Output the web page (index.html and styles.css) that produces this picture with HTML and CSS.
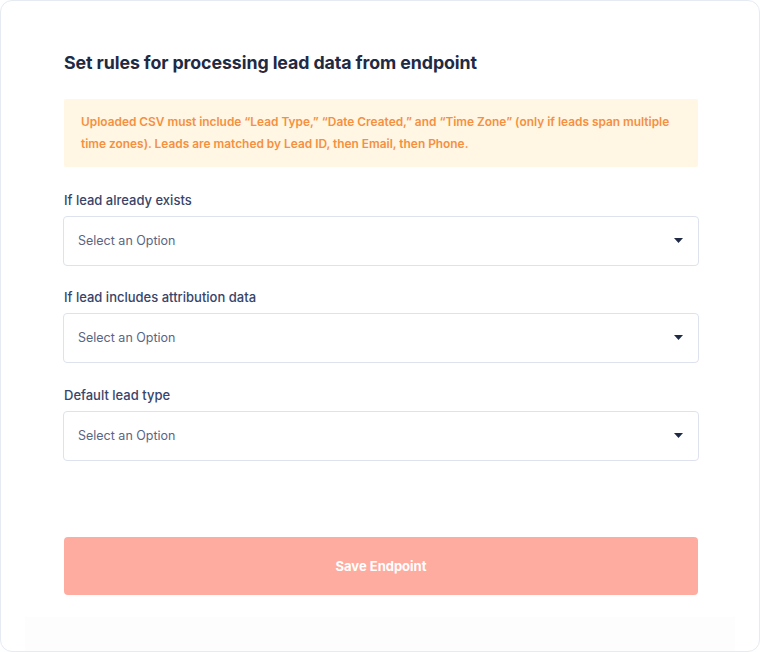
FILE: index.html
```html
<!DOCTYPE html>
<html lang="en">
<head>
<meta charset="utf-8">
<title>Endpoint rules</title>
<link rel="stylesheet" href="styles.css">
</head>
<body>
<div class="card">
  <div class="content">
    <h1 class="title">Set rules for processing lead data from endpoint</h1>
    <div class="notice">Uploaded CSV must include “Lead Type,” “Date Created,” and “Time Zone” (only if leads span multiple time zones). Leads are matched by Lead ID, then Email, then Phone.</div>
    <div class="field">
      <label class="label">If lead already exists</label>
      <div class="select"><span>Select an Option</span><svg class="caret" width="9" height="5" viewBox="0 0 9 5"><path d="M0 0H9L4.5 5Z" fill="#1f2a44"/></svg></div>
    </div>
    <div class="field">
      <label class="label">If lead includes attribution data</label>
      <div class="select"><span>Select an Option</span><svg class="caret" width="9" height="5" viewBox="0 0 9 5"><path d="M0 0H9L4.5 5Z" fill="#1f2a44"/></svg></div>
    </div>
    <div class="field field-last">
      <label class="label">Default lead type</label>
      <div class="select"><span>Select an Option</span><svg class="caret" width="9" height="5" viewBox="0 0 9 5"><path d="M0 0H9L4.5 5Z" fill="#1f2a44"/></svg></div>
    </div>
    <button class="save">Save Endpoint</button>
  </div>
  <div class="footer"></div>
</div>
</body>
</html>
```
FILE: styles.css
```css
html, body {
  margin: 0;
  padding: 0;
  background: #ffffff;
}
body {
  font-family: Inter, "Noto Sans", sans-serif;
}
.card {
  box-sizing: border-box;
  width: 760px;
  height: 652px;
  border: 1px solid #e6eaf2;
  border-radius: 12px;
  background: #ffffff;
  display: flex;
  flex-direction: column;
  overflow: hidden;
}
.content {
  padding: 51px 61px 0 63px;
  display: flex;
  flex-direction: column;
}
.title {
  margin: 0;
  font-size: 17.8px;
  line-height: 22px;
  font-weight: 700;
  color: #1f2a44;
  letter-spacing: -0.1px;
}
.notice {
  margin-top: 25px;
  background: #fff6e4;
  color: #f5903f;
  font-size: 11.9px;
  font-weight: 600;
  line-height: 22px;
  padding: 12px 17px 12px 17px;
  border-radius: 2px;
}
.field {
  display: flex;
  flex-direction: column;
  margin-top: 24px;
}
.field + .field {
  margin-top: 22px;
}
.field + .field-last {
  margin-top: 23px;
}
.label {
  font-size: 13px;
  font-weight: 500;
  color: #38446a;
  line-height: 18px;
  margin-bottom: 7px;
}
.select {
  box-sizing: border-box;
  height: 50px;
  margin-left: -1px;
  margin-right: -1px;
  border: 1px solid #dde2ee;
  border-radius: 4px;
  display: flex;
  align-items: center;
  justify-content: space-between;
  padding: 0 15px 1px 14px;
  font-size: 12.5px;
  color: #5a6583;
}
.caret {
  display: block;
}
.save {
  margin-top: 76px;
  height: 58px;
  border: none;
  border-radius: 4px;
  background: #ffaca0;
  color: #ffffff;
  font-family: Inter, "Noto Sans", sans-serif;
  font-size: 13px;
  font-weight: 700;
}
.footer {
  margin: 22px 24px 0 24px;
  flex: 1;
  background: #fdfdfd;
}
```
